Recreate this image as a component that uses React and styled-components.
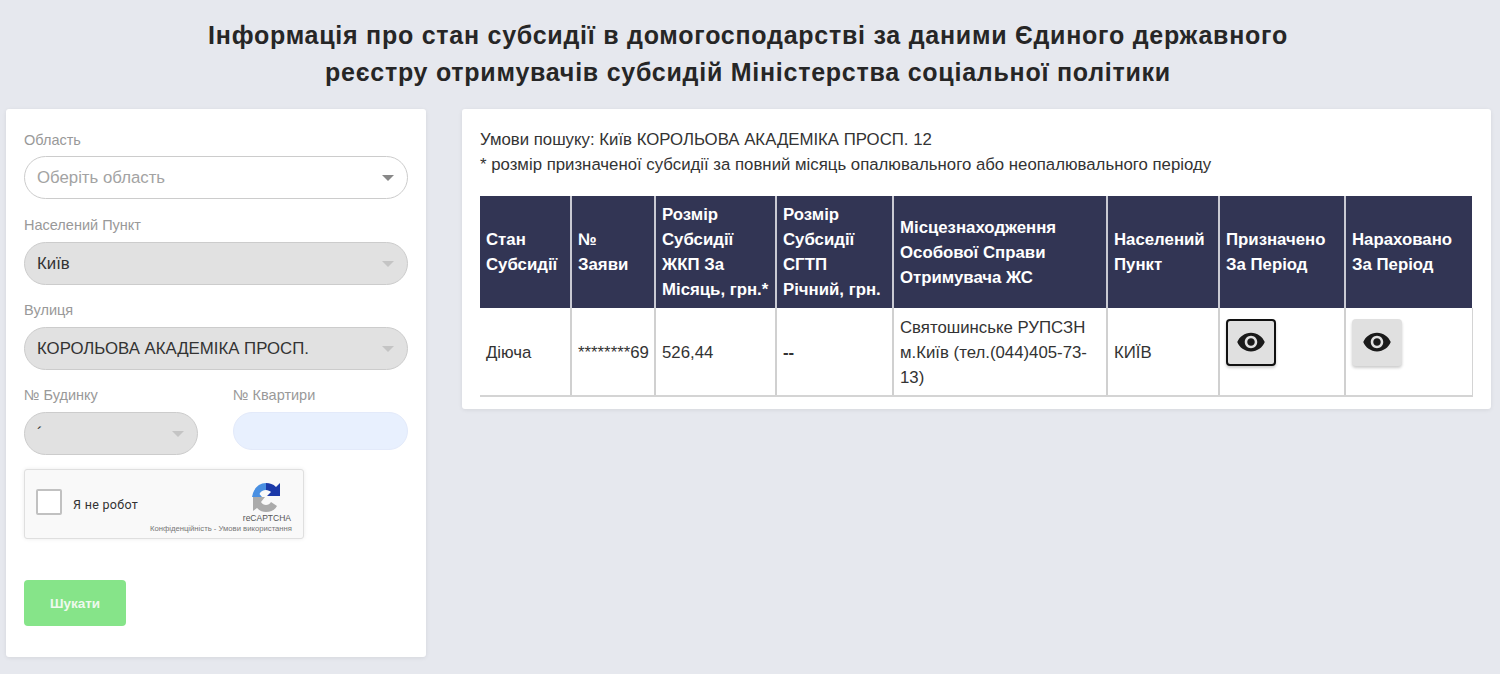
import React from 'react';
import styled, { createGlobalStyle } from 'styled-components';
import { MdVisibility } from 'react-icons/md';

const columns = [
  { width: 91, title: 'Стан Субсидії', value: 'Діюча' },
  { width: 84, title: '№ Заяви', value: '********69' },
  { width: 121, title: 'Розмір Субсидії ЖКП За Місяць, грн.*', value: '526,44' },
  { width: 117, title: 'Розмір Субсидії СГТП Річний, грн.', value: '--', strong: true },
  { width: 214, title: 'Місцезнаходження Особової Справи Отримувача ЖС', value: 'Святошинське РУПСЗН м.Київ (тел.(044)405-73-13)' },
  { width: 112, title: 'Населений Пункт', value: 'КИЇВ' },
  { width: 126, title: 'Призначено За Період', focused: true },
  { width: 127, title: 'Нараховано За Період' },
];

const App = () => (
  <>
    <GlobalStyle />
    <Page>
      <Title>
        Інформація про стан субсидії в домогосподарстві за даними Єдиного державного
        <br />
        реєстру отримувачів субсидій Міністерства соціальної політики
      </Title>
      <Content>
        <FormCard>
          <Field $wide>
            <Label $tight>Область</Label>
            <Select>
              <SelectText $placeholder>Оберіть область</SelectText>
              <Caret />
            </Select>
          </Field>
          <Field>
            <Label>Населений Пункт</Label>
            <Select $disabled>
              <SelectText>Київ</SelectText>
              <Caret $disabled />
            </Select>
          </Field>
          <Field>
            <Label>Вулиця</Label>
            <Select $disabled>
              <SelectText>КОРОЛЬОВА АКАДЕМІКА ПРОСП.</SelectText>
              <Caret $disabled />
            </Select>
          </Field>
          <FieldRow>
            <Field>
              <Label>№ Будинку</Label>
              <Select $disabled>
                <SelectText>´</SelectText>
                <Caret $disabled />
              </Select>
            </Field>
            <Field>
              <Label>№ Квартири</Label>
              <FlatInput />
            </Field>
          </FieldRow>
          <Captcha>
            <CaptchaBox />
            <CaptchaLabel>Я не робот</CaptchaLabel>
            <CaptchaBrand>
              <svg width="29" height="31" viewBox="0 0 29 31">
                <path d="M14 1 C8 1 3 5 1 11 L0 15 L10 15 L7.5 12 C9 9 11 8 14 8 Z" fill="#4a90e2" />
                <path d="M14 1 C18 1 21 2 24 5 L28 1 L28 14 L15 14 L19 10 C18 9 16 8 14 8 Z" fill="#1c3aa9" />
                <path d="M1 15 L1 29 L5 26 C8 29 11 30 14 30 C19 30 23 28 25 24 L19 20 C18 22 16 23 14 23 C12 23 10 22 9 20 L13 15 Z" fill="#ababab" />
              </svg>
              <CaptchaName>reCAPTCHA</CaptchaName>
            </CaptchaBrand>
            <CaptchaLinks>Конфіденційність - Умови використання</CaptchaLinks>
          </Captcha>
          <SearchButton type="button">Шукати</SearchButton>
        </FormCard>

        <ResultCard>
          <Note>Умови пошуку: Київ КОРОЛЬОВА АКАДЕМІКА ПРОСП. 12</Note>
          <Note>* розмір призначеної субсидії за повний місяць опалювального або неопалювального періоду</Note>
          <Table>
            <colgroup>
              {columns.map((c) => (
                <col key={c.title} style={{ width: c.width }} />
              ))}
            </colgroup>
            <thead>
              <tr>
                {columns.map((c) => (
                  <HeadCell key={c.title}>{c.title}</HeadCell>
                ))}
              </tr>
            </thead>
            <tbody>
              <tr>
                {columns.map((c) => (
                  <BodyCell key={c.title} $strong={c.strong}>
                    {c.value || (
                      <EyeButton type="button" $focused={c.focused}>
                        <MdVisibility size={30} />
                      </EyeButton>
                    )}
                  </BodyCell>
                ))}
              </tr>
            </tbody>
          </Table>
        </ResultCard>
      </Content>
    </Page>
  </>
);

const GlobalStyle = createGlobalStyle`
  body {
    margin: 0;
    background: #e6e8ee;
    font-family: "Liberation Sans", Arial, sans-serif;
  }
`;

const Page = styled.div`
  height: 674px;
  overflow: hidden;
  padding: 17px 10px 0 6px;
  box-sizing: border-box;
`;

const Title = styled.h1`
  margin: 0 0 18px;
  font-size: 25px;
  line-height: 37px;
  font-weight: 700;
  letter-spacing: 0.75px;
  text-align: center;
  color: #262626;
`;

const Content = styled.div`
  display: flex;
  align-items: flex-start;
  gap: 36px;
`;

const Card = styled.div`
  background: #fff;
  border-radius: 3px;
  box-shadow: 0 1px 4px rgba(0, 0, 0, 0.08);
  box-sizing: border-box;
`;

const FormCard = styled(Card)`
  width: 420px;
  height: 548px;
  padding: 23px 18px 0;
  flex-shrink: 0;
`;

const ResultCard = styled(Card)`
  flex: 1;
  height: 300px;
  padding: 18px 18px 0;
`;

const Field = styled.div`
  margin-bottom: ${(p) => (p.$wide ? '18px' : '17px')};
`;

const FieldRow = styled.div`
  display: grid;
  grid-template-columns: 174px 175px;
  gap: 35px;
`;

const Label = styled.div`
  font-size: 14.5px;
  line-height: 16px;
  color: #999;
  margin-bottom: ${(p) => (p.$tight ? '8px' : '9px')};
`;

const Select = styled.div`
  height: 43px;
  border: 1px solid #ccc;
  border-radius: 22px;
  background: ${(p) => (p.$disabled ? '#e1e1e1' : '#fff')};
  display: flex;
  align-items: center;
  justify-content: space-between;
  padding: 0 13px 0 12px;
  box-sizing: border-box;
`;

const SelectText = styled.span`
  font-size: 16.8px;
  color: ${(p) => (p.$placeholder ? '#a3a3a3' : '#333')};
`;

const Caret = styled.span`
  width: 0;
  height: 0;
  border-left: 6px solid transparent;
  border-right: 6px solid transparent;
  border-top: 6px solid ${(p) => (p.$disabled ? '#c4c4c4' : '#888')};
`;

const FlatInput = styled.div`
  height: 38px;
  border-radius: 19px;
  background: #e8f0fe;
  border: 1px solid #e3eafa;
  box-sizing: border-box;
`;

const Captcha = styled.div`
  position: relative;
  width: 280px;
  height: 70px;
  margin-top: -3px;
  margin-bottom: 41px;
  padding: 0 11px 14px;
  background: #f9f9f9;
  border: 1px solid #dfdfdf;
  border-radius: 3px;
  box-shadow: 0 0 4px rgba(0, 0, 0, 0.08);
  box-sizing: border-box;
  display: flex;
  align-items: center;
`;

const CaptchaBox = styled.div`
  width: 22px;
  height: 22px;
  background: #fff;
  border: 2px solid #c1c1c1;
  border-radius: 2px;
  margin-top: 10px;
`;

const CaptchaLabel = styled.div`
  margin-left: 11px;
  margin-top: 14px;
  font-size: 12.5px;
  letter-spacing: 0.3px;
  color: #333;
  font-family: Roboto, sans-serif;
  flex: 1;
`;

const CaptchaBrand = styled.div`
  display: flex;
  flex-direction: column;
  align-items: center;
  padding-top: 10px;
  margin-right: 1px;
`;

const CaptchaName = styled.div`
  font-size: 8.5px;
  color: #555;
`;

const CaptchaLinks = styled.div`
  position: absolute;
  right: 11px;
  bottom: 5px;
  font-size: 7.7px;
  color: #777;
  white-space: nowrap;
`;

const SearchButton = styled.button`
  display: block;
  width: 102px;
  height: 46px;
  border: 0;
  border-radius: 4px;
  background: #86e489;
  color: #eef9ee;
  font: 700 13.5px "Liberation Sans", Arial, sans-serif;
`;

const Note = styled.div`
  font-size: 16.8px;
  line-height: 25px;
  color: #333;
`;

const Table = styled.table`
  width: 992px;
  margin-top: 19px;
  table-layout: fixed;
  border-collapse: collapse;
`;

const HeadCell = styled.th`
  height: 112px;
  padding: 0 3px 0 6px;
  background: #323554;
  color: #fff;
  font-size: 16.8px;
  line-height: 25px;
  font-weight: 700;
  text-align: left;
  border-left: 2px solid #c9cad3;
  box-sizing: border-box;

  &:first-child {
    border-left: 0;
  }
`;

const BodyCell = styled.td`
  height: 88px;
  padding: 2px 3px 0 6px;
  font-size: 16.8px;
  line-height: 25px;
  font-weight: ${(p) => (p.$strong ? 700 : 400)};
  color: #333;
  border-left: 2px solid #d0d0d0;
  border-bottom: 2px solid #d4d4d4;
  box-sizing: border-box;
  vertical-align: middle;

  &:first-child {
    border-left: 0;
  }

  &:last-child {
    border-right: 1px solid #d4d4d4;
  }
`;

const EyeButton = styled.button`
  display: flex;
  align-items: center;
  justify-content: center;
  width: 50px;
  height: 47px;
  margin-bottom: 21px;
  padding: 0;
  border: ${(p) => (p.$focused ? '2px solid #111' : '0')};
  border-radius: 4px;
  background: #e0e0e0;
  color: #1a1a1a;
  box-shadow: 0 2px 3px rgba(0, 0, 0, 0.2);
  box-sizing: border-box;
`;

export default App;
